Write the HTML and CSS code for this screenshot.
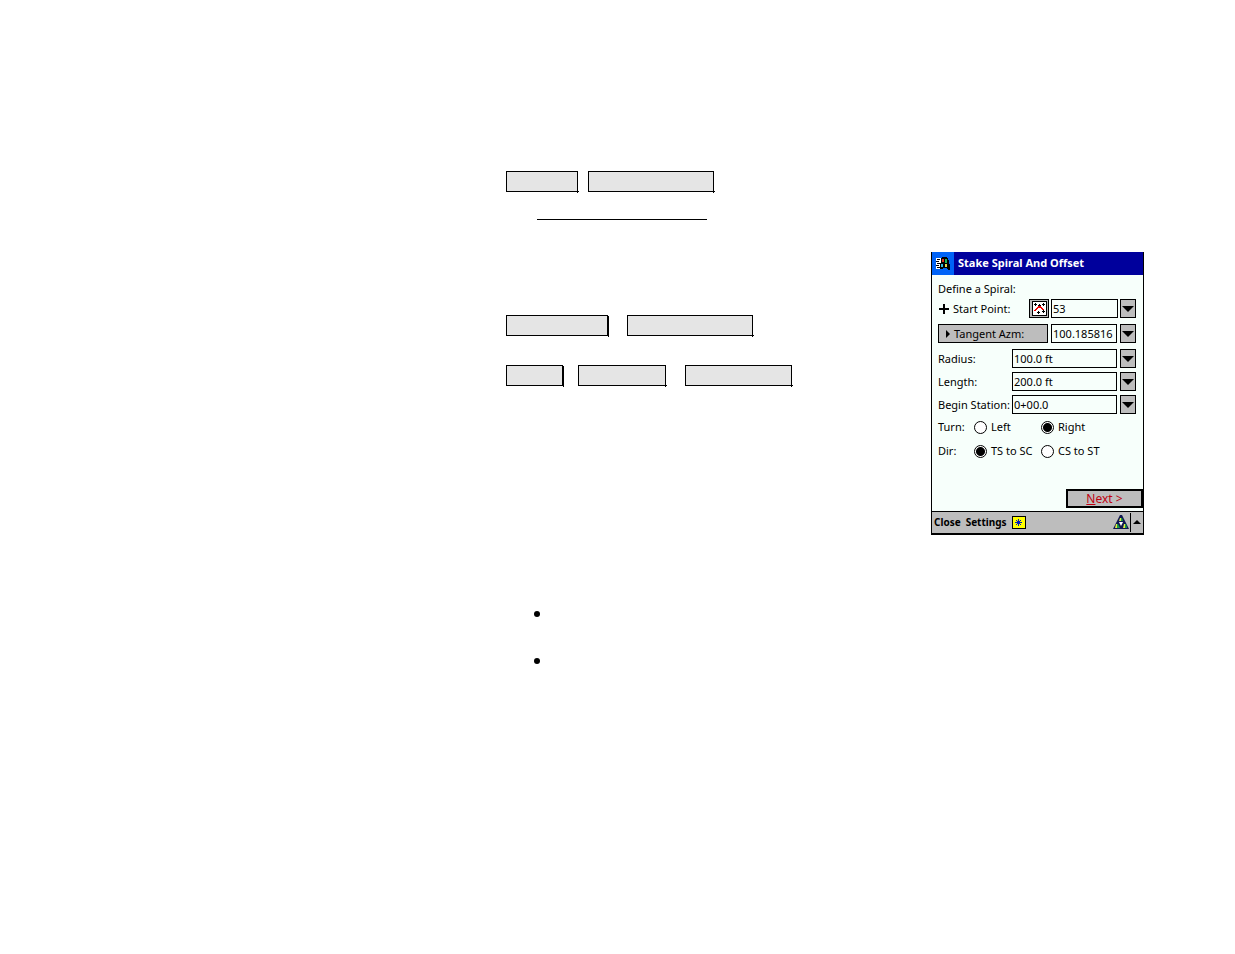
FILE: index.html
```html
<!DOCTYPE html>
<html lang="en">
<head>
<meta charset="utf-8">
<title>Stake Spiral And Offset</title>
<link rel="stylesheet" href="styles.css">
</head>
<body>
<main class="page">
  <section class="steps">
    <div class="keys"><span class="key key-w72"></span><span class="key key-w126"></span></div>
    <div class="rule"></div>
    <div class="keys keys-wide"><span class="key key-w102 key-heavy"></span><span class="key key-w126"></span></div>
    <div class="keys keys-last"><span class="key key-w58 key-heavy"></span><span class="key key-w88"></span><span class="key key-w107"></span></div>
    <ul class="bullets"><li></li><li></li></ul>
  </section>
  <form class="device">
    <header class="title">
      <svg class="logo" viewBox="0 0 22 23" shape-rendering="crispEdges" aria-hidden="true">
        <path fill="#fff" d="M4 6h5v11H4z"/>
        <path fill="#000" d="M5 7h3v1H5zM4 9h3v1H4zM5 11h3v1H5zM4 13h3v1H4zM5 15h3v1H5z"/>
        <path fill="#000" d="M9 6h1V5h5v1h1v2h1v4h1v6h-2v-1h-1v-1h-4v1H8v-6h1z"/>
        <path fill="#e03020" d="M10 7h2v3h-2z"/><path fill="#18b55a" d="M13 7h2v4h-2z"/>
        <path fill="#30b8e0" d="M9 12h2v3H9z"/><path fill="#e7d64a" d="M13 12h2v3h-2z"/>
      </svg>
      <h1>Stake Spiral And Offset</h1>
    </header>
    <div class="body">
      <p class="intro">Define a Spiral:</p>
      <div class="row row-start">
        <svg class="plus" viewBox="0 0 12 12" aria-hidden="true"><path fill="#000" d="M5 1h2v4h4v2H7v4H5V7H1V5h4z"/></svg>
        <label class="label" for="start">Start Point:</label>
        <button class="map" type="button" aria-label="Pick from map">
          <svg viewBox="0 0 15 15" shape-rendering="crispEdges" aria-hidden="true">
            <path fill="#000" d="M0 0h15v15H0z"/><path fill="#fff" d="M1 1h13v13H1z"/>
            <path fill="#000" d="M3 2h1v1h1v1H4v1H3V4H2V3h1zM11 2h1v1h1v1h-1v1h-1V4h-1V3h1zM7 3h1v1h1v1H6V4h1zM6 10h1v1h1v1H7v1H6v-1H5v-1h1zM11 9h1v1h1v1h-1v1h-1v-1h-1v-1h1z"/>
            <path fill="#f00000" d="M6 5h3v1h1v1h1v1h1v1h-2V8H9V7H6v1H5v1H4v1H2V9h1V8h1V7h1V6h1z"/>
          </svg>
        </button>
        <input class="field field-start" id="start" type="text" value="53">
        <button class="drop" type="button" aria-label="Start point options"></button>
      </div>
      <div class="row row-tangent">
        <button class="tangent" type="button"><span class="arrow"></span>Tangent Azm:</button>
        <input class="field field-azimuth" type="text" value="100.185816" aria-label="Tangent azimuth">
        <button class="drop" type="button" aria-label="Azimuth options"></button>
      </div>
      <div class="row"><label class="label" for="radius">Radius:</label><input class="field" id="radius" type="text" value="100.0 ft"><button class="drop" type="button" aria-label="Radius options"></button></div>
      <div class="row"><label class="label" for="length">Length:</label><input class="field" id="length" type="text" value="200.0 ft"><button class="drop" type="button" aria-label="Length options"></button></div>
      <div class="row"><label class="label" for="station">Begin Station:</label><input class="field" id="station" type="text" value="0+00.0"><button class="drop" type="button" aria-label="Station options"></button></div>
      <div class="choices">
        <span>Turn:</span>
        <label><input type="radio" name="turn">Left</label>
        <label><input type="radio" name="turn" checked>Right</label>
        <span>Dir:</span>
        <label><input type="radio" name="dir" checked>TS to SC</label>
        <label><input type="radio" name="dir">CS to ST</label>
      </div>
      <button class="next" type="button"><u>N</u>ext &gt;</button>
    </div>
    <footer class="bar">
      <button type="button">Close</button>
      <button type="button">Settings</button>
      <button class="star" type="button" aria-label="Favorites">
        <svg viewBox="0 0 11 11" shape-rendering="crispEdges" aria-hidden="true"><path fill="#0018c0" d="M5 2h1v2h1V3h1v1H7v1h2v1H7v1h1v1H7V7H6v2H5V7H4v1H3V7h1V6H2V5h2V4H3V3h1v1h1z"/></svg>
      </button>
      <svg class="pyramid" viewBox="0 0 16 15" aria-hidden="true">
        <path fill="#101850" d="M7 0h2l7 14H0z"/>
        <path fill="#e8e840" d="M7 3h1v3H6zM3 9h1v4H2zM11 9h1v4h-2z"/>
        <path fill="#18a04a" d="M8 3h1l1 3H8zM4 9h1l2 4H4zM12 9h1l1 4h-2z"/>
        <path fill="#fff" d="M6 7h4l-2 4z"/>
      </svg>
      <button class="more" type="button" aria-label="More"></button>
    </footer>
  </form>
</main>
</body>
</html>
```
FILE: styles.css
```css
* { box-sizing: border-box; }
body { margin: 0; background: #fff; color: #000; font: 11px/16px "Noto Sans", Tahoma, sans-serif; }
button, input { font: inherit; color: inherit; margin: 0; padding: 0; border-radius: 0; }
h1, p, ul { margin: 0; padding: 0; }
svg { display: block; }
.page { display: grid; grid-template-columns: 1fr 213px; align-items: start; padding: 171px 91px 32px 41%; }

.keys { display: flex; gap: 10px; }
.key { position: relative; height: 21px; border: 1px solid #000; background: #e5e5e5; }
.key::after { content: ""; position: absolute; right: -1px; bottom: -1px; width: 1px; height: 1px; background: #000; box-shadow: 1px 0 #000, 0 1px #000; }
.key-heavy::after { right: -2px; bottom: -2px; height: 21px; box-shadow: none; }
.key-w58 { width: 57px; margin-right: 5px; }
.key-w72 { width: 72px; }
.key-w88 { width: 88px; margin-right: 9px; }
.key-w102 { width: 102px; margin-right: 9px; }
.key-w107 { width: 107px; }
.key-w126 { width: 126px; }
.rule { width: 170px; height: 1px; margin: 27px 0 95px 31px; background: #000; }
.keys-last { margin-top: 29px; }
.bullets { display: grid; gap: 41px; margin: 225px 0 0 28px; list-style: none; }
.bullets li { width: 6px; height: 6px; border-radius: 50%; background: #000; }

.device { margin-top: 81px; border: solid #000; border-width: 0 1px 2px; background: #f7fffb; }
.title { display: flex; align-items: center; gap: 4px; background: #00009c; color: #fff; height: 23px; }
.logo { width: 22px; height: 23px; background: #0063f7; }
.title h1 { font-size: 11px; line-height: 15px; padding-bottom: 2px; }
.body { display: flex; flex-direction: column; padding: 6px 0 3px 6px; }
.intro { height: 18px; }
.row { display: flex; align-items: center; gap: 3px; height: 19px; margin: 0 7px 4px 0; }
.row-start { margin-bottom: 6px; gap: 2px; }
.row-tangent { margin-bottom: 6px; }
.plus { width: 12px; height: 12px; }
.label { flex: 1 1 0; min-width: 0; white-space: nowrap; }
.row-start .label { padding-left: 1px; }
.field { width: 105px; height: 19px; padding: 0 1px; border: 1px solid #000; background: transparent; }
.field-start { width: 67px; }
.field-azimuth { width: 66px; }
.map { width: 20px; height: 19px; padding: 0 1px; border: 1px solid #000; background: #bdbdbd; }
.map svg { width: 15px; height: 15px; margin: auto; }
.drop { display: grid; place-items: center; width: 16px; height: 19px; border: 1px solid #000; background: #bdbdbd; }
.drop::after { content: ""; border: solid transparent; border-width: 6px 6px 0; border-top-color: #000; }
.tangent { flex: 1; display: flex; align-items: center; gap: 4px; height: 19px; padding-left: 7px; border: 1px solid #000; background: #bdbdbd; white-space: nowrap; }
.arrow { border: solid transparent; border-width: 4px 0 4px 4px; border-left-color: #000; }
.choices { display: grid; grid-template-columns: 36px 67px 1fr; grid-auto-rows: 24px; align-items: center; margin-top: -3px; }
.choices label { display: flex; align-items: center; gap: 4px; white-space: nowrap; }
.choices input { appearance: none; width: 13px; height: 13px; border: 1px solid #000; border-radius: 50%; background: #fff; }
.choices input:checked { background: radial-gradient(circle, #000 4px, #fff 5px); }
.next { align-self: flex-end; width: 77px; height: 19px; margin-top: 26px; border: 2px solid #000; background: #bdbdbd; color: #c00010; font-size: 12px; line-height: 14px; }
.bar { display: flex; align-items: center; gap: 5px; height: 22px; padding: 0 1px 1px 2px; border-top: 1px solid #000; background: #bdbdbd; }
.bar button { border: 0; background: none; font-size: 10px; font-weight: 700; }
.bar .star { width: 14px; height: 13px; border: 1px solid #000; background: #ff0; }
.star svg { width: 11px; height: 11px; }
.pyramid { width: 16px; height: 15px; margin-left: auto; }
.bar .more { display: grid; place-items: center; width: 12px; height: 19px; margin-left: -4px; border-left: 1px solid #000; }
.more::after { content: ""; border: solid transparent; border-width: 0 4px 4px; border-bottom-color: #000; }
```
